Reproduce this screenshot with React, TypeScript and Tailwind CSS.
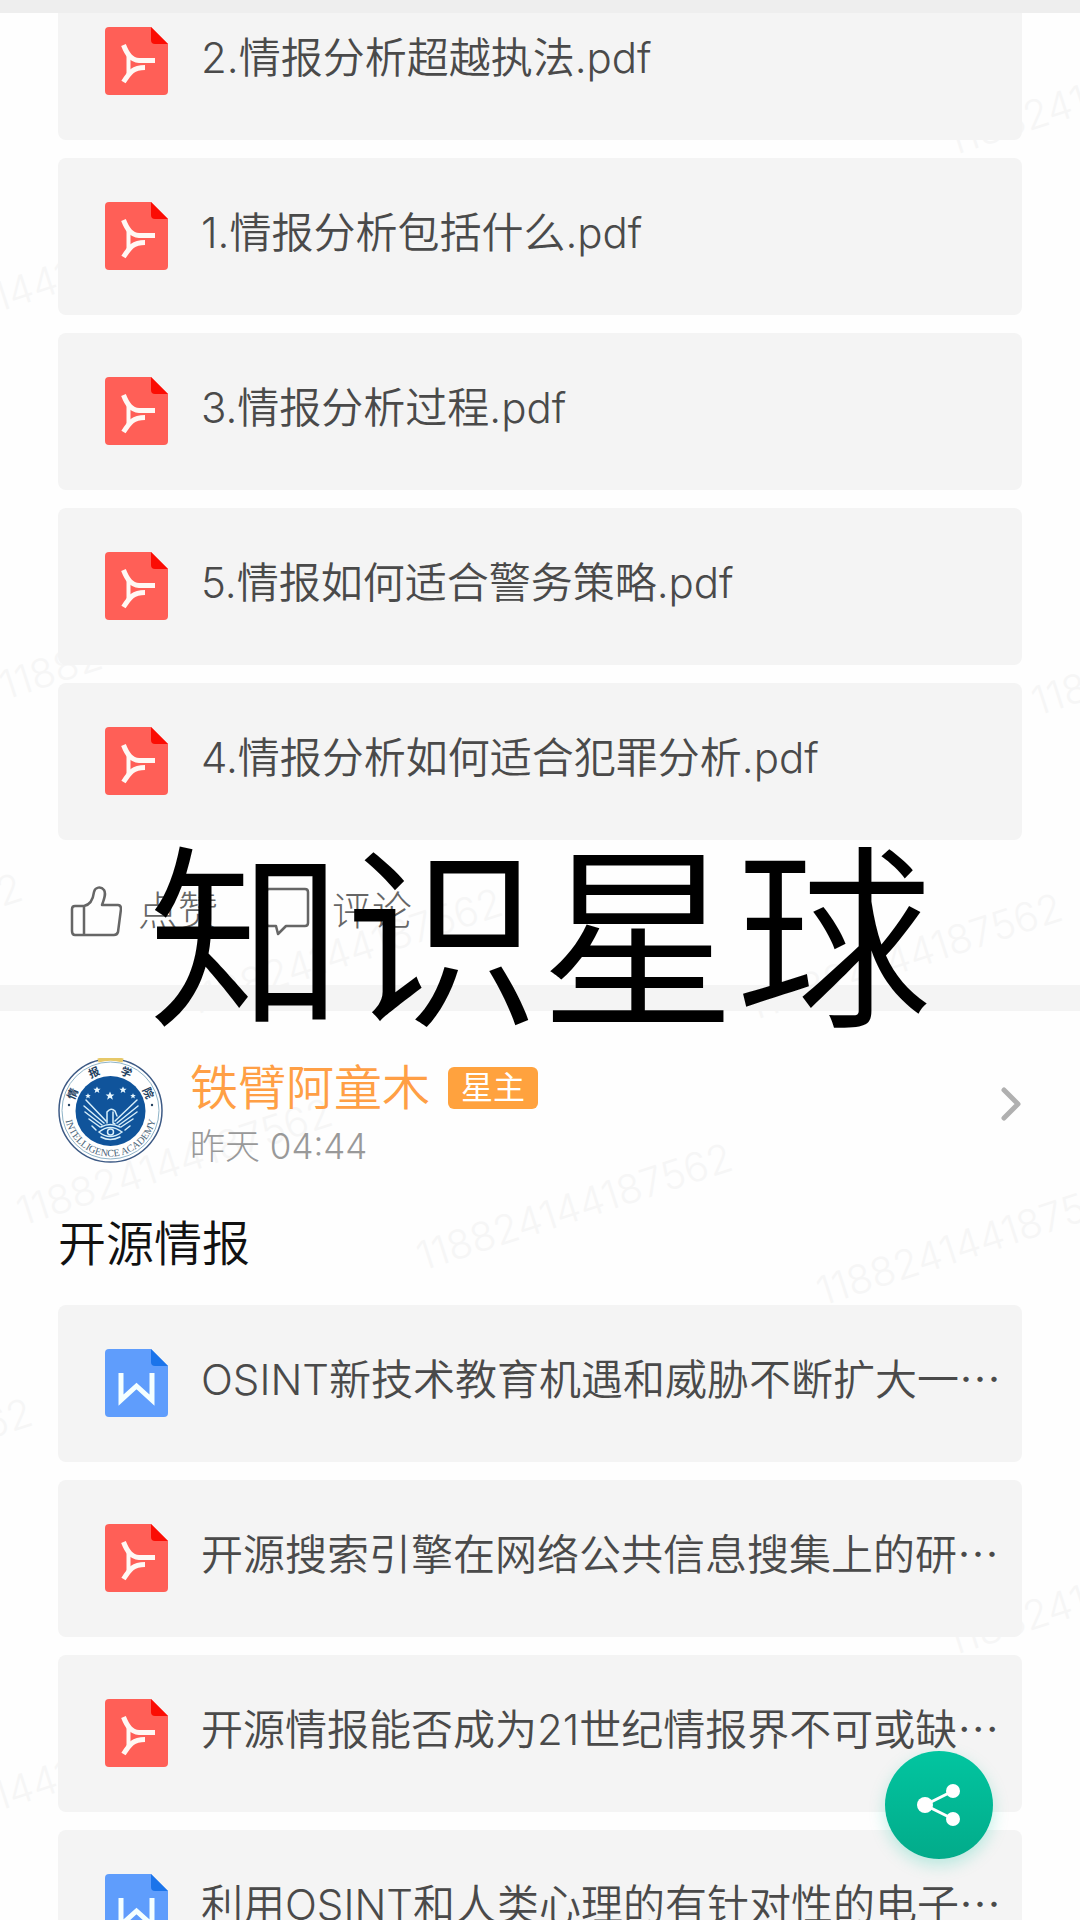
import React from "react";

type FileKind = "pdf" | "word";
type FileItem = { kind: FileKind; name: string };

const analysisFiles: FileItem[] = [
  { kind: "pdf", name: "2.情报分析超越执法.pdf" },
  { kind: "pdf", name: "1.情报分析包括什么.pdf" },
  { kind: "pdf", name: "3.情报分析过程.pdf" },
  { kind: "pdf", name: "5.情报如何适合警务策略.pdf" },
  { kind: "pdf", name: "4.情报分析如何适合犯罪分析.pdf" },
];

const osintFiles: FileItem[] = [
  { kind: "word", name: "OSINT新技术教育机遇和威胁不断扩大一⋯" },
  { kind: "pdf", name: "开源搜索引擎在网络公共信息搜集上的研⋯" },
  { kind: "pdf", name: "开源情报能否成为21世纪情报界不可或缺⋯" },
  { kind: "word", name: "利用OSINT和人类心理的有针对性的电子⋯" },
];

function FileIcon({ kind }: { kind: FileKind }) {
  const pdf = kind === "pdf";
  return (
    <svg viewBox="0 0 63 68" className="h-[68px] w-[63px] shrink-0" aria-hidden="true">
      <path
        d="M4 0H46L63 17V64Q63 68 59 68H4Q0 68 0 64V4Q0 0 4 0Z"
        fill={pdf ? "#ff5f57" : "#5f9dfc"}
      />
      <path d="M46 0L63 17H50Q46 17 46 13Z" fill={pdf ? "#fb0d04" : "#1b74ea"} />
      {pdf ? (
        <g fill="none" stroke="#fff8f4" strokeWidth="5">
          <path d="M18.500 18C22 27 26 33 34 33.500H50" />
          <path d="M18.500 55C25 45 28 40.500 40 40.500" />
          <path d="M23.500 27V48" strokeWidth="4" />
        </g>
      ) : (
        <path d="M16 24V51L31.500 37L47 51V24" fill="none" stroke="#f4ffff" strokeWidth="5" />
      )}
    </svg>
  );
}

function FileList({ files, label }: { files: FileItem[]; label: string }) {
  return (
    <ul className="flex flex-col gap-[18px]" aria-label={label}>
      {files.map((f) => (
        <li key={f.name}>
          <button
            type="button"
            className="flex h-[157px] w-full items-start gap-[33px] rounded-lg bg-[#f4f4f4] pt-11 pl-[47px] text-left"
          >
            <FileIcon kind={f.kind} />
            <span className="text-[42px] leading-[62px] font-[350] whitespace-nowrap text-[#4a4a4a]">{f.name}</span>
          </button>
        </li>
      ))}
    </ul>
  );
}

function Emblem() {
  const star = "M0-4L1.2-1.3 4-1.3 1.8.5 2.6 3.4 0 1.7-2.6 3.4-1.8.5-4-1.3-1.2-1.3Z";
  const stars = [
    [30, 38, 0.7],
    [39, 32, 0.9],
    [52, 38, 1.1],
    [65, 32, 0.9],
    [75, 38, 0.7],
  ];
  return (
    <svg viewBox="0 0 105 105" className="size-[105px] shrink-0" role="img" aria-label="情报学院">
      <defs>
        <path id="ring-top" d="M15 52.500A37.500 37.500 0 0 1 90 52.500" />
        <path id="ring-bottom" d="M6.500 52.500A46 46 0 0 0 98.500 52.500" />
      </defs>
      <circle cx="52.500" cy="52.500" r="51.500" fill="#fff" stroke="#3d5a85" strokeWidth="1.500" />
      <circle cx="52.500" cy="52.500" r="48.500" fill="none" stroke="#8fb4c8" strokeWidth="1" />
      <path d="M40 2.500Q52.500-1 65 2.500" fill="none" stroke="#e6c868" strokeWidth="4" />
      <circle cx="52.500" cy="53" r="35" fill="#10549b" />
      {stars.map(([x, y, s]) => (
        <path key={x} d={star} fill="#e8f8ff" transform={`translate(${x} ${y}) scale(${s})`} />
      ))}
      <g fill="none" stroke="#d8effa" strokeWidth="1.500" strokeLinecap="round">
        <path d="M49 65V54Q53 49 57 53L59 58M55 54V65L57 66" />
        <path d="M48 63L28 42M46 65L26 48M44 67L27 54M42 69L31 61M38 72L34 68" />
        <path d="M57 63L79 42M59 65L80 48M61 67L79 54M63 69L75 61M67 72L72 68" />
        <path d="M41 74Q52 65 64 74Q52 83 41 74Z" />
        <circle cx="52.500" cy="74" r="3" />
        <path d="M43 69Q52 64 62 69M43 79Q52 84 62 79" />
      </g>
      <g fontFamily="Noto Sans CJK SC" fontSize="11" fontWeight="700" fill="#24415f">
        <text>
          <textPath href="#ring-top" startOffset="10">情</textPath>
        </text>
        <text>
          <textPath href="#ring-top" startOffset="38">报</textPath>
        </text>
        <text>
          <textPath href="#ring-top" startOffset="68">学</textPath>
        </text>
        <text>
          <textPath href="#ring-top" startOffset="96">院</textPath>
        </text>
      </g>
      <text fontFamily="Liberation Serif" fontSize="10" fill="#4a6478" textAnchor="middle">
        <textPath href="#ring-bottom" startOffset="50%">INTELLIGENCE ACADEMY</textPath>
      </text>
      <circle cx="11" cy="47" r="1.200" fill="#24415f" />
      <circle cx="94" cy="47" r="1.200" fill="#24415f" />
    </svg>
  );
}

const watermarkSpots = [
  "left-[-137px] top-[266px]",
  "left-[-7px] top-[614px]",
  "left-[-300px] top-[915px]",
  "left-[180px] top-[930px]",
  "left-[740px] top-[935px]",
  "left-[10px] top-[1140px]",
  "left-[410px] top-[1185px]",
  "left-[810px] top-[1220px]",
  "left-[-290px] top-[1440px]",
  "left-[-137px] top-[1765px]",
  "left-[940px] top-[70px]",
  "left-[1025px] top-[630px]",
  "left-[940px] top-[1570px]",
];

function Watermarks() {
  return (
    <div className="pointer-events-none absolute inset-0" aria-hidden="true">
      {watermarkSpots.map((spot) => (
        <span
          key={spot}
          className={"absolute -rotate-[18deg] text-[40px] leading-[44px] font-light whitespace-nowrap text-[#f6f6f6] " + spot}
        >
          118824144187562
        </span>
      ))}
    </div>
  );
}

export default function App() {
  return (
    <div className="relative h-screen overflow-hidden bg-[#fefefe] font-[Inter,'Noto_Sans_CJK_SC',sans-serif]">
      <Watermarks />
      <div className="absolute inset-x-0 top-0 z-10 h-[13px] bg-[#eee]" />

      <main className="relative -mt-[17px]">
        <article>
          <div className="px-[58px]">
            <FileList files={analysisFiles} label="情报分析" />
          </div>
          <div className="relative flex h-[145px] items-start px-[70px] pt-11">
            <button type="button" className="flex items-center gap-4 text-[40px] leading-[54px] font-light text-[#666]">
              <svg viewBox="0 0 52 52" className="size-[52px]" fill="none" stroke="currentColor" strokeWidth="2.500" strokeLinejoin="round" aria-hidden="true">
                <path d="M14 21H5Q2 21 2 24V46Q2 50 5 50H44Q47 50 48 47L51 24Q51 20 48 20H32C35 12 36 8 34 5C31 1 25 2 24 7C23 15 19 20 14 21ZM14 21V50" />
              </svg>
              点赞
            </button>
            <button type="button" className="ml-[46px] flex items-center gap-[22px] text-[40px] leading-[54px] font-light text-[#666]">
              <svg viewBox="0 0 46 50" className="h-[50px] w-[46px]" fill="none" stroke="currentColor" strokeWidth="2.500" strokeLinejoin="round" aria-hidden="true">
                <path d="M5 3H41Q44 3 44 6V37Q44 40 41 40H22L14 48L12 40H5Q2 40 2 37V6Q2 3 5 3Z" />
              </svg>
              评论
            </button>
            <h1 className="absolute inset-x-0 -top-5 z-10 text-center text-[196px] leading-[240px] font-[350] text-black">
              知识星球
            </h1>
          </div>
        </article>

        <div className="h-[26px] bg-[#f4f4f4]" />

        <article className="px-[58px] pt-[47px]">
          <header className="flex items-start">
            <Emblem />
            <div className="ml-[27px] flex-1">
              <div className="flex items-center gap-[18px]">
                <span className="text-[48px] leading-[60px] font-[350] text-[#ff9f45]">铁臂阿童木</span>
                <span className="flex h-[42px] w-[90px] items-center justify-center rounded-md bg-[#ffa23e] text-[32px] leading-[42px] font-normal text-white">
                  星主
                </span>
              </div>
              <time className="block text-[35px] leading-[56px] font-light text-[#999]">昨天 04:44</time>
            </div>
            <button type="button" aria-label="查看详情" className="mt-[28px]">
              <svg viewBox="0 0 22 36" className="h-9 w-[22px]" fill="none" stroke="#b0b0b0" strokeWidth="5" strokeLinecap="round" strokeLinejoin="round" aria-hidden="true">
                <path d="M4 4L18 18L4 32" />
              </svg>
            </button>
          </header>
          <h2 className="mt-10 mb-[31px] text-[48px] leading-[60px] font-[350] text-[#111]">开源情报</h2>
          <FileList files={osintFiles} label="开源情报" />
        </article>
      </main>

      <button
        type="button"
        aria-label="分享"
        className="fixed right-[87px] bottom-[61px] z-20 flex size-[108px] items-center justify-center rounded-full bg-linear-to-b from-[#02c5a0] to-[#02ab8a] shadow-[0_6px_16px_rgba(0,200,160,0.25)]"
      >
        <svg viewBox="0 0 44 44" className="size-11" fill="#fff" stroke="#fff" aria-hidden="true">
          <path d="M36 8L8 22L36 36" fill="none" strokeWidth="3" />
          <circle cx="8" cy="22" r="8" stroke="none" />
          <circle cx="36" cy="8" r="7" stroke="none" />
          <circle cx="36" cy="36" r="7" stroke="none" />
        </svg>
      </button>
    </div>
  );
}
